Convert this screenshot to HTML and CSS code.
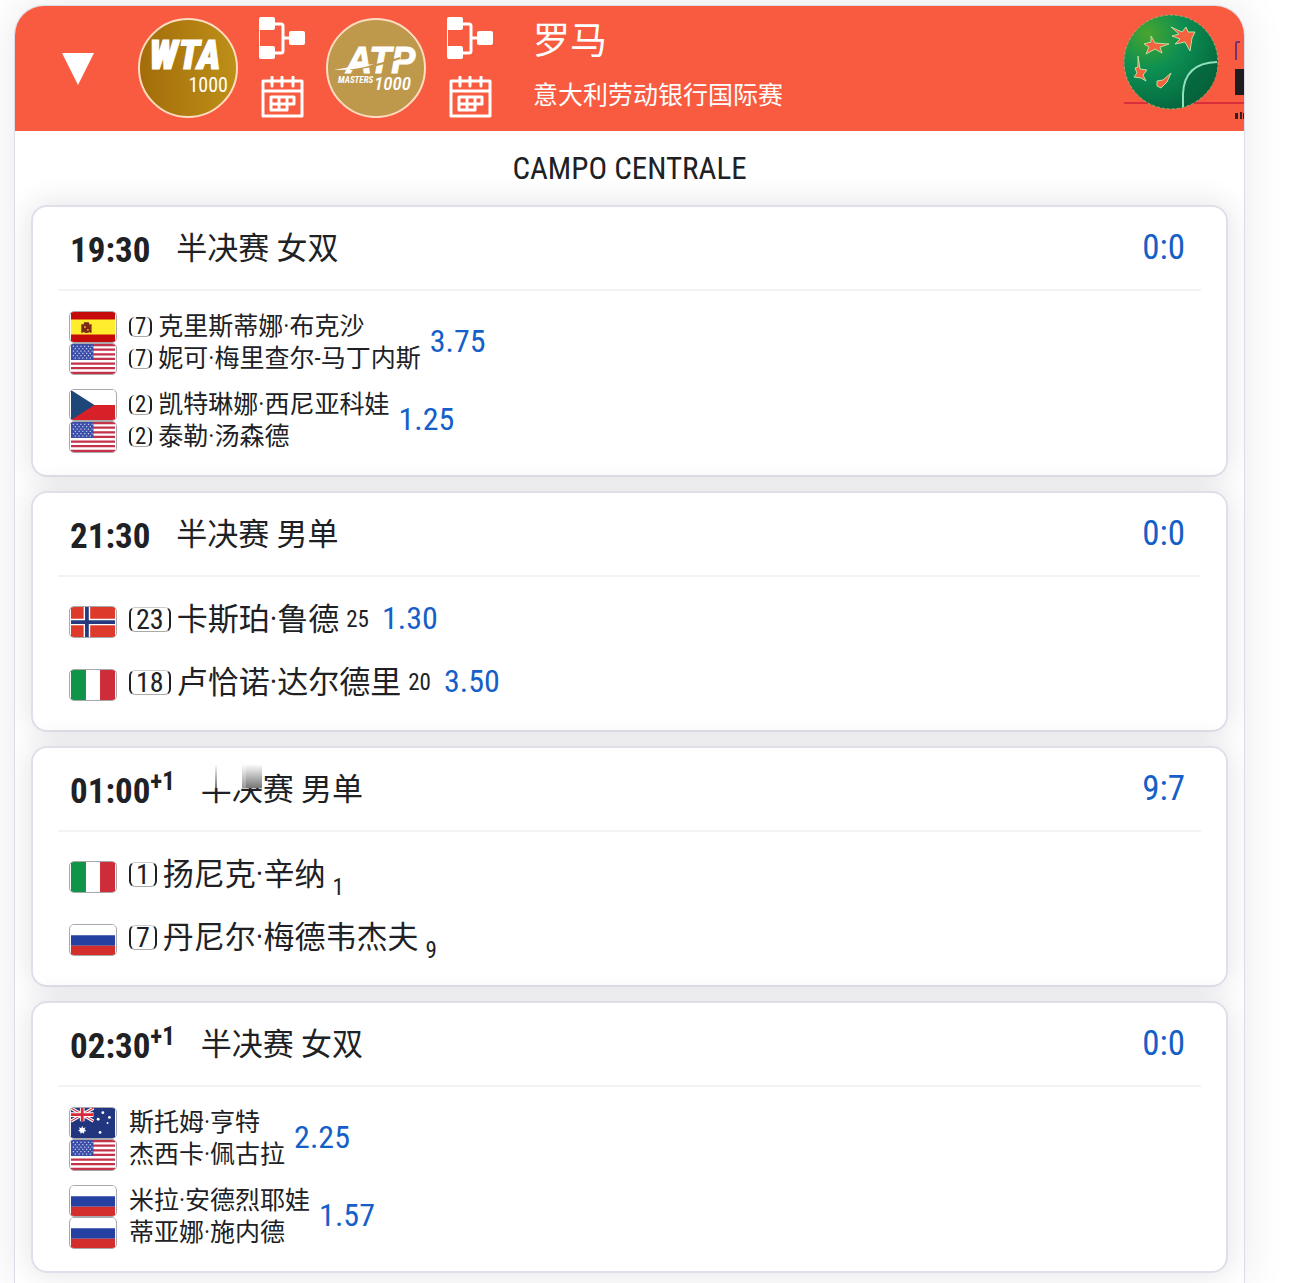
FILE: index.html
```html
<!DOCTYPE html>
<html lang="zh-CN">

<head>
    <meta charset="UTF-8">
    <meta name="viewport" content="width=device-width, initial-scale=1.0">
    <title>罗马 - 意大利劳动银行国际赛</title>
    <link rel="stylesheet" href="styles.css">
</head>

<body>

    <!-- shared icons and flags -->
    <svg class="sprite" aria-hidden="true">
        <symbol id="icon-draw" viewBox="0 0 47 43">
            <path d="M14 7h8q2 0 2 2v25q0 2-2 2h-8M24 21h8" fill="none" stroke="#fff" stroke-width="3" />
            <path d="M.5 10v24" stroke="#fff" stroke-width="1" />
            <rect x="0" y="0" width="16" height="13" rx="2" fill="#fff" />
            <rect x="0" y="29" width="16" height="13" rx="2" fill="#fff" />
            <rect x="30" y="14" width="16" height="14" rx="2" fill="#fff" />
        </symbol>
        <symbol id="icon-calendar" viewBox="0 0 43 42">
            <g fill="none" stroke="#fff">
                <path d="M2 5h39v35H2zM2 15h39" stroke-width="3" stroke-linejoin="round" />
                <path d="M11 1v9M21 1v9M32 1v9" stroke-width="3" stroke-linecap="round" />
                <path d="M10 21h23v7h-7v6H10zM10 28h16M18 21v13M26 21v7" stroke-width="3" stroke-linejoin="round" />
            </g>
        </symbol>
        <symbol id="flag-es" viewBox="0 0 47 32">
            <path fill="#c60b0b" d="M0 0h47v32H0z" />
            <path fill="#ffed2e" d="M0 8h47v16H0z" />
            <path fill="#7d2b16" d="M11 13h2v9h-2zM20 13h2v9h-2zM13 14l1-3h5l1 3v7q-3 3-7 0z" />
            <path fill="#c9962c" d="M14 15h2v2h-2zM17 18h2v2h-2z" />
        </symbol>
        <symbol id="flag-us" viewBox="0 0 47 32">
            <path fill="#fff" d="M0 0h47v32H0z" />
            <path stroke="#c4324a" stroke-width="2.4" d="M0 1.2h47M0 6.1h47M0 11h47M0 15.9h47M0 20.8h47M0 25.7h47M0 30.7h47" />
            <path fill="#3c4fa8" d="M0 0h24v17H0z" />
            <path stroke="#c5cdf0" stroke-width="1.3" stroke-dasharray="1.3 2.7" d="M2 2.500h21M4 5h18M2 7.500h21M4 10h18M2 12.500h21M4 15h18" />
        </symbol>
        <symbol id="flag-cz" viewBox="0 0 47 32">
            <path fill="#fff" d="M0 0h47v16H0z" />
            <path fill="#d72027" d="M0 16h47v16H0z" />
            <path fill="#1d4679" d="M0 0l25 16L0 32z" />
        </symbol>
        <symbol id="flag-no" viewBox="0 0 47 32">
            <path fill="#de3a2b" d="M0 0h47v32H0z" />
            <path stroke="#fff" stroke-width="7" d="M17 0v32M0 16h47" />
            <path stroke="#263a80" stroke-width="4" d="M17 0v32M0 16h47" />
        </symbol>
        <symbol id="flag-it" viewBox="0 0 47 32">
            <path fill="#fff" d="M0 0h47v32H0z" />
            <path fill="#109548" d="M0 0h16v32H0z" />
            <path fill="#cf2c3a" d="M31 0h16v32H31z" />
        </symbol>
        <symbol id="flag-ru" viewBox="0 0 47 32">
            <path fill="#fff" d="M0 0h47v12H0z" />
            <path fill="#2440a0" d="M0 11h47v11H0z" />
            <path fill="#d32e2b" d="M0 22h47v10H0z" />
        </symbol>
        <symbol id="flag-au" viewBox="0 0 47 32">
            <path fill="#22357f" d="M0 0h47v32H0z" />
            <path stroke="#fff" stroke-width="3.500" d="M0 0l24 14M24 0L0 14" />
            <path stroke="#d8283a" stroke-width="1.200" d="M0 0l24 14M24 0L0 14" />
            <path stroke="#fff" stroke-width="5" d="M12 0v14M0 7h24" />
            <path stroke="#d8283a" stroke-width="3" d="M12 0v14M0 7h24" />
            <path fill="#fff" d="M12 19l1 2.500 2.500-1-1 2.500 2 1.500-2.500.5v2.500l-2-1.500-2 1.500V25l-2.500-.5 2-1.500-1-2.500 2.500 1z" />
            <g fill="#fff">
                <circle cx="34" cy="5" r="1.500" />
                <circle cx="29" cy="12" r="1.500" />
                <circle cx="41" cy="10" r="1.500" />
                <circle cx="39" cy="16" r="1" />
                <circle cx="31" cy="26" r="1.500" />
            </g>
        </symbol>
    </svg>

    <main class="tournament">
        <header class="tournament-header">
            <button class="toggle" type="button" aria-label="收起">
                <svg width="32" height="32" viewBox="0 0 32 32"><path d="M0 0h32L16 32z" fill="#fff" /></svg>
            </button>

            <svg class="tour-logo" viewBox="0 0 100 100" role="img" aria-label="WTA 1000">
                <defs>
                    <linearGradient id="gold">
                        <stop offset="0" stop-color="#a36c0a" />
                        <stop offset="1" stop-color="#bd9018" />
                    </linearGradient>
                </defs>
                <circle cx="50" cy="49" r="49" fill="url(#gold)" stroke="#ffdcc0" stroke-width="2" />
                <text class="wta-name" x="11" y="50">WTA</text>
                <text class="wta-level" x="90" y="73" text-anchor="end">1000</text>
            </svg>
            <nav class="links">
                <a href="#wta-draw" aria-label="WTA 签表"><svg width="47" height="43"><use href="#icon-draw" /></svg></a>
                <a href="#wta-calendar" aria-label="WTA 赛程"><svg width="43" height="42"><use href="#icon-calendar" /></svg></a>
            </nav>

            <svg class="tour-logo" viewBox="0 0 100 100" role="img" aria-label="ATP Masters 1000">
                <circle cx="50" cy="49" r="49" fill="#be994c" stroke="#ffdcc0" stroke-width="2" />
                <text class="atp-name" x="20" y="54">ATP</text>
                <path d="M24 50q26-2 50-11" fill="none" stroke="#be994c" stroke-width="2" />
                <path d="M8 51q20-4 40-6-14 6-40 6z" fill="#fff" />
                <text class="atp-masters" x="12" y="64">MASTERS</text>
                <text class="atp-level" x="48" y="71">1000</text>
            </svg>
            <nav class="links">
                <a href="#atp-draw" aria-label="ATP 签表"><svg width="47" height="43"><use href="#icon-draw" /></svg></a>
                <a href="#atp-calendar" aria-label="ATP 赛程"><svg width="43" height="42"><use href="#icon-calendar" /></svg></a>
            </nav>

            <div class="tournament-name">
                <h1>罗马</h1>
                <p>意大利劳动银行国际赛</p>
            </div>

            <svg class="sponsor" width="120" height="125" viewBox="0 0 120 125" aria-hidden="true">
                <defs>
                    <radialGradient id="ball" cx=".25" cy=".2" r=".85">
                        <stop offset="0" stop-color="#48a52e" />
                        <stop offset=".45" stop-color="#0d8f52" />
                        <stop offset="1" stop-color="#04683f" />
                    </radialGradient>
                </defs>
                <path d="M0 97h121" stroke="#d92f3c" stroke-width="2" />
                <circle cx="47" cy="56" r="47" fill="url(#ball)" stroke="#a9ab72" stroke-width="1" stroke-dasharray="3 2" />
                <path d="M59 101V88q1-31 34-32 3 30-34 45z" fill="#06603b" opacity=".6" />
                <path d="M59 101V88q1-31 34-32" fill="none" stroke="#8fe0bd" stroke-width="2" />
                <g fill="#f4623f" stroke="#b9e0a0" stroke-width="1">
                    <path d="M47 21l11 5 4-5 2 5 7 0-3 6-2 13-5-9-10 2 5-5-8-3 7-2z" />
                    <path d="M27 30l4 7 14 1-9 3 2 6-7-4-9 5 3-7-5-3 7-2z" />
                    <path d="M14 50l2 13 7 1-4 5 3 6-5-3-7-1 3-4-2-5 3-1z" />
                    <path d="M33 75l6-1 8-7-4 9-6 6-4-2z" />
                </g>
                <path d="M112 36v18M116 36h-4" stroke="#713276" stroke-width="2" />
                <path d="M111 63h10v26h-10z" fill="#1d1d20" />
                <path d="M111 107h3v6h-3zM116 106h2v7h-2zM119 107h1v6h-1z" fill="#312126" />
            </svg>
        </header>

        <h2 class="court">CAMPO CENTRALE</h2>

        <section class="match">
            <div class="match-header">
                <time>19:30</time>
                <span class="round">半决赛 女双</span>
                <a class="score" href="#match-1">0:0</a>
            </div>
            <div class="team">
                <div class="players">
                    <div class="player"><svg class="flag"><use href="#flag-es" /></svg><span class="seed">7</span><span class="name">克里斯蒂娜·布克沙</span></div>
                    <div class="player"><svg class="flag"><use href="#flag-us" /></svg><span class="seed">7</span><span class="name">妮可·梅里查尔-马丁内斯</span></div>
                </div>
                <a class="odds" href="#odds-1">3.75</a>
            </div>
            <div class="team">
                <div class="players">
                    <div class="player"><svg class="flag"><use href="#flag-cz" /></svg><span class="seed">2</span><span class="name">凯特琳娜·西尼亚科娃</span></div>
                    <div class="player"><svg class="flag"><use href="#flag-us" /></svg><span class="seed">2</span><span class="name">泰勒·汤森德</span></div>
                </div>
                <a class="odds" href="#odds-1">1.25</a>
            </div>
        </section>

        <section class="match singles">
            <div class="match-header">
                <time>21:30</time>
                <span class="round">半决赛 男单</span>
                <a class="score" href="#match-2">0:0</a>
            </div>
            <div class="team">
                <div class="player"><svg class="flag"><use href="#flag-no" /></svg><span class="seed">23</span><span class="name">卡斯珀·鲁德</span><span class="rank">25</span></div>
                <a class="odds" href="#odds-2">1.30</a>
            </div>
            <div class="team">
                <div class="player"><svg class="flag"><use href="#flag-it" /></svg><span class="seed">18</span><span class="name">卢恰诺·达尔德里</span><span class="rank">20</span></div>
                <a class="odds" href="#odds-2">3.50</a>
            </div>
        </section>

        <section class="match singles">
            <div class="match-header">
                <time>01:00<sup>+1</sup></time>
                <span class="round smudged">半决赛 男单</span>
                <a class="score" href="#match-3">9:7</a>
            </div>
            <div class="team">
                <div class="player"><svg class="flag"><use href="#flag-it" /></svg><span class="seed">1</span><span class="name">扬尼克·辛纳</span><sub class="rank">1</sub></div>
            </div>
            <div class="team">
                <div class="player"><svg class="flag"><use href="#flag-ru" /></svg><span class="seed">7</span><span class="name">丹尼尔·梅德韦杰夫</span><sub class="rank">9</sub></div>
            </div>
        </section>

        <section class="match">
            <div class="match-header">
                <time>02:30<sup>+1</sup></time>
                <span class="round">半决赛 女双</span>
                <a class="score" href="#match-4">0:0</a>
            </div>
            <div class="team">
                <div class="players">
                    <div class="player"><svg class="flag"><use href="#flag-au" /></svg><span class="name">斯托姆·亨特</span></div>
                    <div class="player"><svg class="flag"><use href="#flag-us" /></svg><span class="name">杰西卡·佩古拉</span></div>
                </div>
                <a class="odds" href="#odds-4">2.25</a>
            </div>
            <div class="team">
                <div class="players">
                    <div class="player"><svg class="flag"><use href="#flag-ru" /></svg><span class="name">米拉·安德烈耶娃</span></div>
                    <div class="player"><svg class="flag"><use href="#flag-ru" /></svg><span class="name">蒂亚娜·施内德</span></div>
                </div>
                <a class="odds" href="#odds-4">1.57</a>
            </div>
        </section>
    </main>

</body>

</html>
```
FILE: styles.css
```css
* {
    box-sizing: border-box;
}

body {
    margin: 0;
    padding: 5px 45px 0 14px;
    background-color: #fff;
    color: #202124;
    font-family: "Roboto Condensed", Roboto, "Noto Sans CJK SC", sans-serif;
    overflow-x: hidden;
}

a {
    color: #1560c8;
    text-decoration: none;
}

.sprite {
    display: none;
}

.tournament {
    padding-bottom: 10px;
    border: 1px solid #dcdce6;
    border-bottom: none;
    border-radius: 30px 30px 0 0;
    background-color: #fff;
    box-shadow: 0 0 40px rgba(40, 40, 90, 0.1);
    overflow: hidden;
}

.tournament-header {
    display: flex;
    align-items: center;
    height: 125px;
    padding-left: 47px;
    background-color: #f95b40;
    color: #fff;
}

.toggle {
    padding: 0;
    border: none;
    background: none;
    cursor: pointer;
}

.toggle svg {
    display: block;
}

.tour-logo {
    flex: none;
    width: 100px;
    height: 100px;
    margin-left: 44px;
    fill: #fff;
    overflow: visible;
}

.links + .tour-logo {
    margin-left: 20px;
}

.wta-name {
    font-size: 40px;
    font-style: italic;
    font-weight: 900;
    stroke: #fff;
    stroke-width: 1px;
}

.wta-level {
    font-size: 20px;
}

.atp-name {
    font-family: "Liberation Sans", sans-serif;
    font-size: 36px;
    font-style: italic;
    font-weight: bold;
    stroke: #fff;
    stroke-width: 1px;
}

.atp-masters {
    font-size: 9px;
    font-style: italic;
    font-weight: bold;
}

.atp-level {
    font-size: 19px;
    font-style: italic;
    font-weight: 500;
}

.links {
    display: flex;
    flex-direction: column;
    align-items: center;
    gap: 16px;
    margin-left: 21px;
    padding-bottom: 2px;
}

.links svg {
    display: block;
}

.tournament-name {
    margin-left: 39px;
}

.tournament-name h1 {
    margin: 0;
    font-size: 37px;
    font-weight: normal;
    line-height: 54px;
}

.tournament-name p {
    margin: 0;
    font-size: 25px;
    line-height: 54px;
}

.sponsor {
    flex: none;
    margin-left: auto;
}

.court {
    margin: 0;
    padding-top: 2px;
    font-size: 31px;
    font-weight: normal;
    line-height: 72px;
    text-align: center;
}

.match {
    margin: 0 16px 14px;
    padding: 0 25px 22px;
    border: 2px solid #dfdfe9;
    border-radius: 16px;
    background-color: #fff;
    box-shadow: 0 0 30px rgba(40, 40, 70, 0.14);
}

.match:last-child {
    margin-bottom: 0;
}

.match-header {
    display: flex;
    align-items: center;
    height: 84px;
    margin-bottom: 20px;
    padding: 0 16px 0 12px;
    border-bottom: 2px solid #f3f3f5;
}

time {
    padding-top: 4px;
    font-size: 35px;
    font-weight: bold;
}

sup {
    font-size: 25px;
    line-height: 0;
}

.round {
    margin-left: 26px;
    padding-bottom: 6px;
    font-size: 31px;
}

/* first two characters are half faded out */
.smudged {
    position: relative;
}

.smudged::before {
    content: "";
    position: absolute;
    top: 0;
    left: 0;
    width: 62px;
    height: 24px;
    background:
        linear-gradient(rgba(90, 90, 90, 0), #777) 14px 0 / 2px 24px no-repeat,
        linear-gradient(rgba(150, 150, 150, 0), #999) 41px 0 / 4px 24px no-repeat,
        linear-gradient(rgba(120, 120, 120, 0), #777) 45px 0 / 16px 24px no-repeat,
        #fff;
}

.score {
    margin-left: auto;
    padding-bottom: 2px;
    font-size: 35px;
}

.team {
    display: flex;
    align-items: center;
    padding-left: 11px;
}

.team + .team {
    margin-top: 14px;
}

.player {
    display: flex;
    align-items: center;
    height: 32px;
    font-size: 25px;
}

.flag {
    flex: none;
    width: 48px;
    height: 32px;
    margin-right: 12px;
    border: 1px solid #a9a9ad;
    border-radius: 5px;
}

.seed {
    margin-right: 6px;
    padding: 0 4px;
    border: 1px solid #202124;
    border-width: 0 2px 1px;
    border-bottom-color: #aaa;
    border-radius: 6px;
    font-size: 23px;
    line-height: 19px;
}

.name {
    padding-bottom: 6px;
}

.odds {
    margin-left: 9px;
    padding-bottom: 5px;
    font-size: 32px;
}

.singles .match-header {
    margin-bottom: 15px;
}

.singles {
    padding-bottom: 20px;
}

.singles .player {
    height: 55px;
    font-size: 31px;
}

.singles .team + .team {
    margin-top: 8px;
}

.singles .flag {
    margin-top: 4px;
}

.singles .seed {
    padding: 0 5px;
    border-top-width: 1px;
    border-top-color: #ccc;
    font-size: 28px;
    line-height: 23px;
}

.singles .name {
    padding-bottom: 6px;
}

.singles .odds {
    margin-left: 13px;
    padding-bottom: 3px;
}

.rank {
    margin-left: 7px;
    font-size: 23px;
}

sub.rank {
    padding-top: 26px;
}
```
